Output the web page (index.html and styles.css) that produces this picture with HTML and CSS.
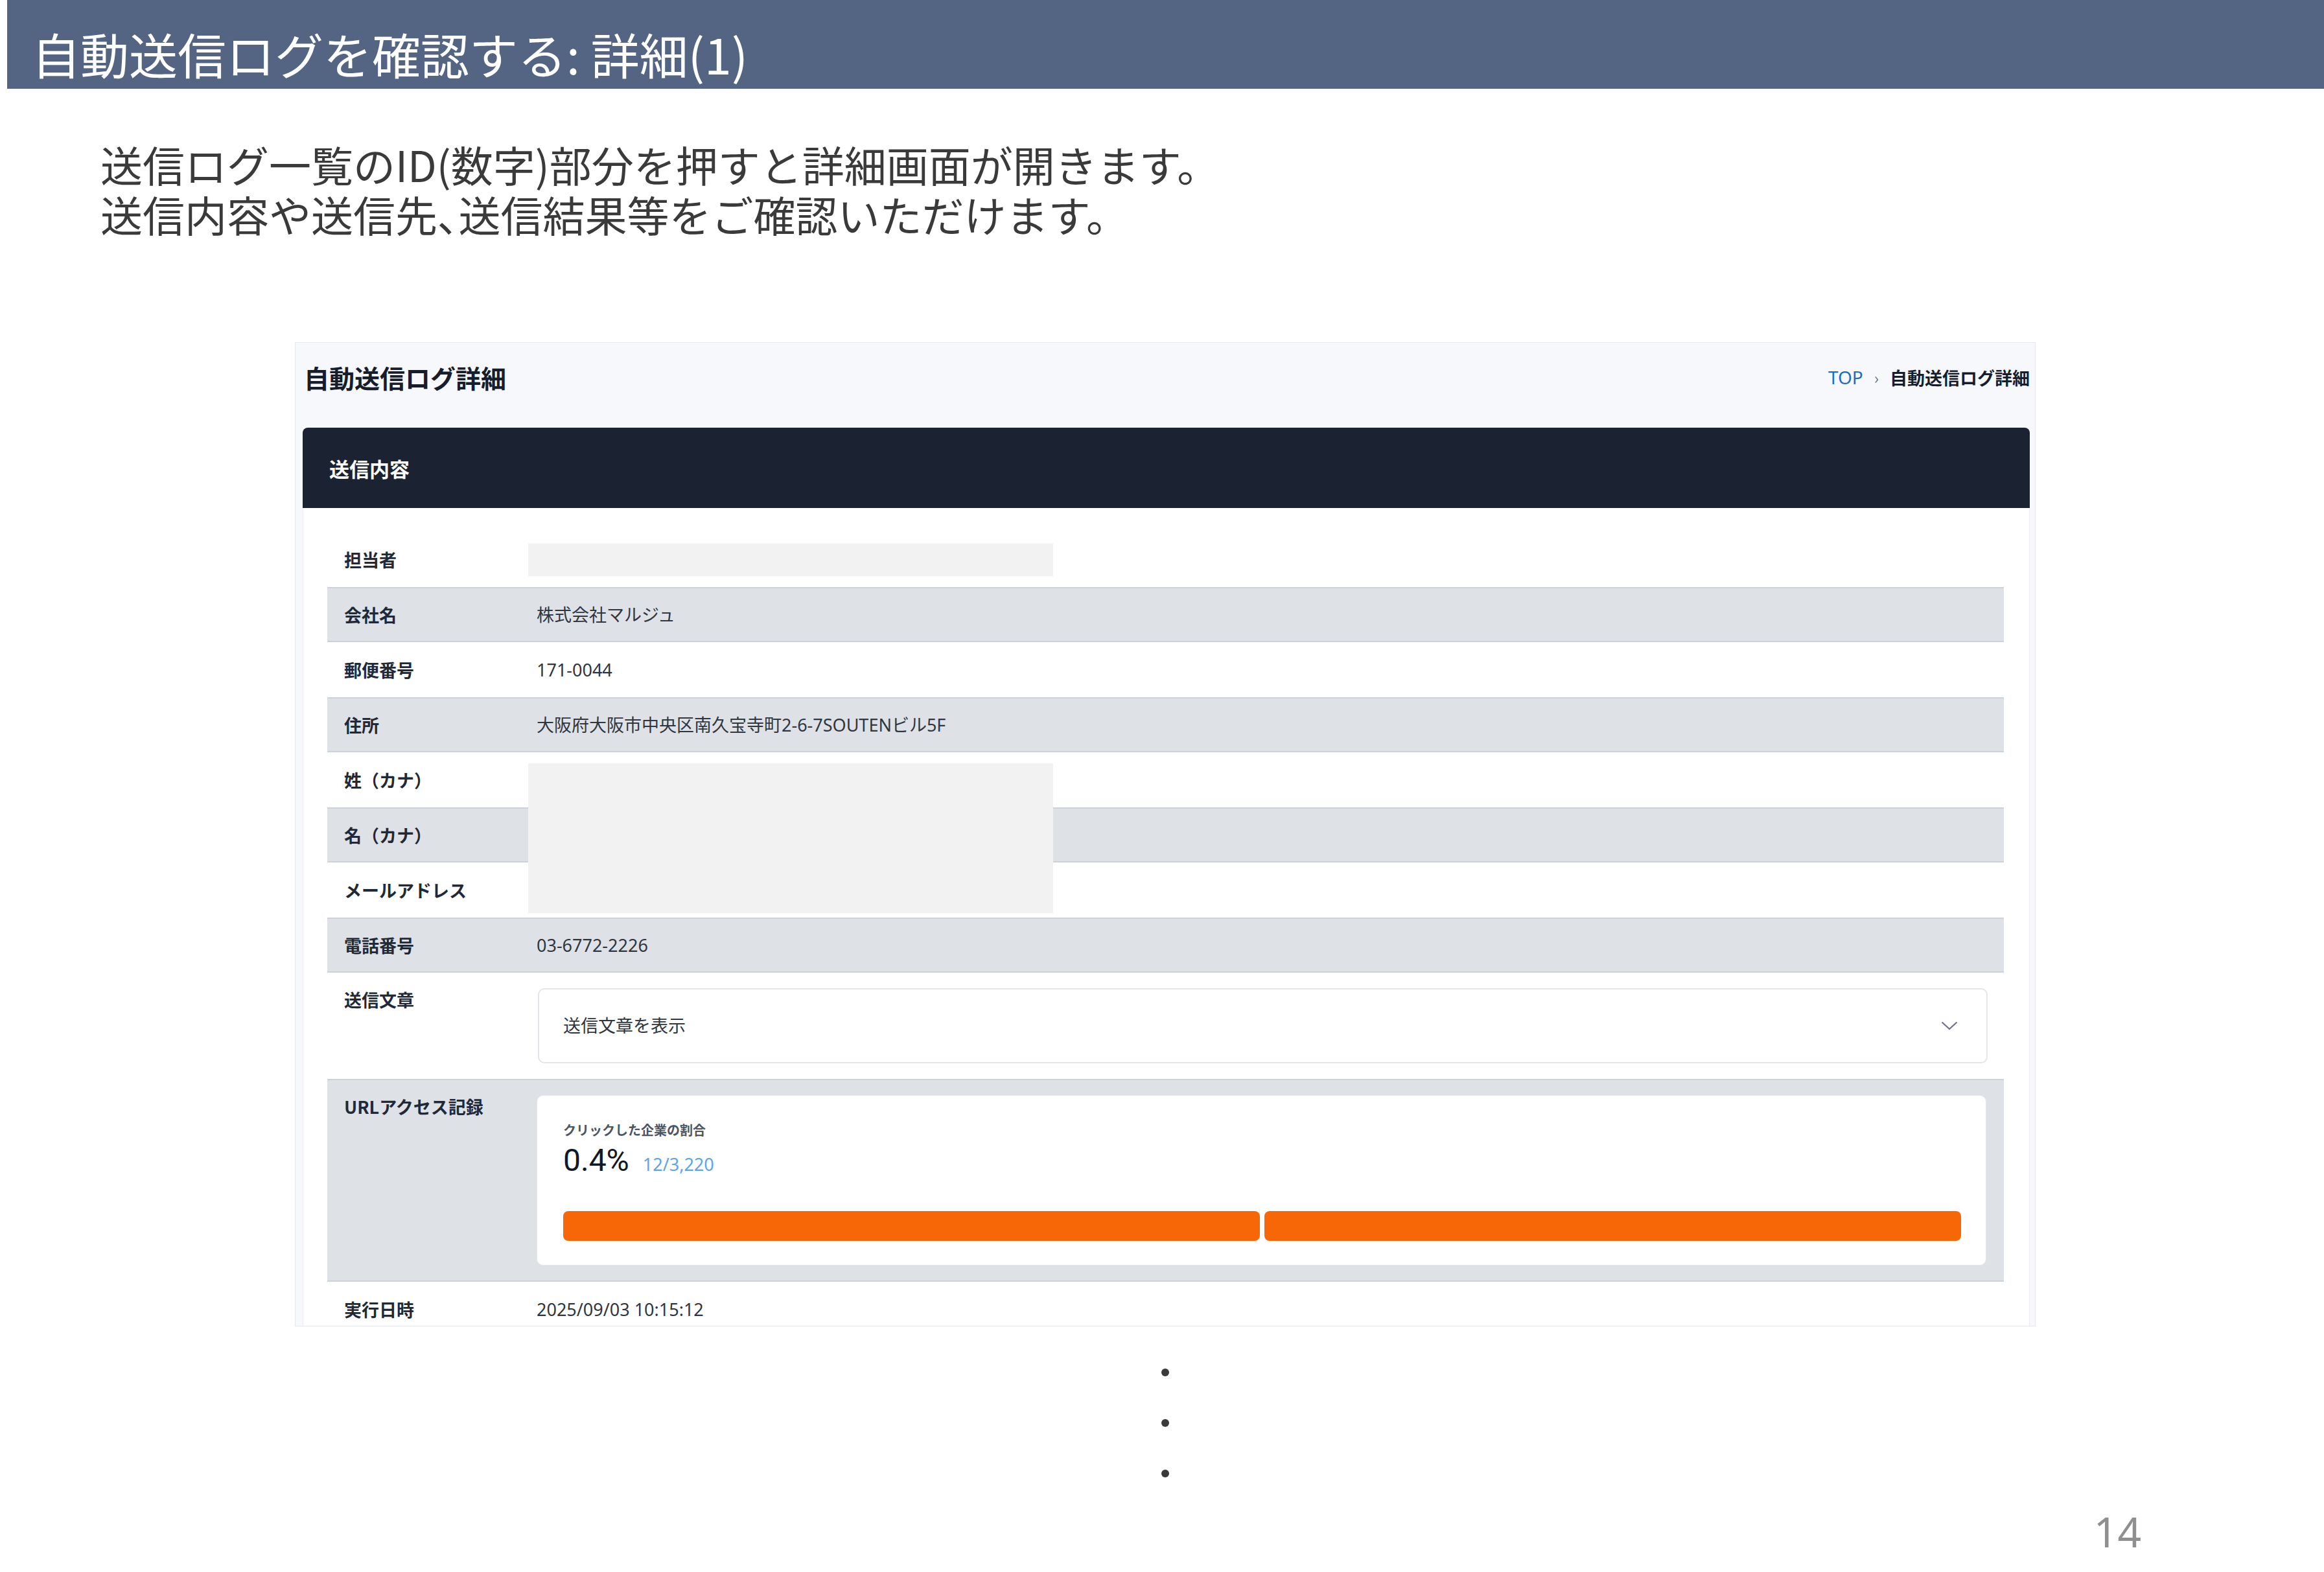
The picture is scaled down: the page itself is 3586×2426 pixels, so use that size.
FILE: index.html
```html
<!doctype html>
<html lang="ja">
  <head>
    <meta charset="UTF-8" />
    <title>自動送信ログを確認する: 詳細(1)</title>
    <link rel="stylesheet" href="styles.css">
  </head>
  <body>
    <div class="slide">
      <h1 class="slide-title">自動送信ログを確認する: 詳細(1)</h1>

      <p class="lead">
        送信ログ一覧のID(数字)部分を押すと詳細画面が開きます。<br />
        送信内容や送信先<span class="tight">、</span>送信結果等をご確認いただけます。
      </p>

      <div class="shot">
        <div class="page-head">
          <h2 class="page-title">自動送信ログ詳細</h2>
          <div class="crumbs">
            <span class="crumb-link">TOP</span>
            <span class="crumb-sep">›</span>
            <span class="crumb-current">自動送信ログ詳細</span>
          </div>
        </div>

        <div class="panel">
          <div class="panel-head">送信内容</div>
          <div class="panel-body">
            <div class="row">
              <div class="label">担当者</div>
              <div class="value"><div class="redact-line"></div></div>
            </div>
            <div class="row alt">
              <div class="label">会社名</div>
              <div class="value">株式会社マルジュ</div>
            </div>
            <div class="row">
              <div class="label">郵便番号</div>
              <div class="value">171-0044</div>
            </div>
            <div class="row alt">
              <div class="label">住所</div>
              <div class="value">大阪府大阪市中央区南久宝寺町2-6-7SOUTENビル5F</div>
            </div>
            <div class="row">
              <div class="label">姓（カナ）</div>
              <div class="value"></div>
            </div>
            <div class="row alt">
              <div class="label">名（カナ）</div>
              <div class="value"></div>
            </div>
            <div class="row">
              <div class="label">メールアドレス</div>
              <div class="value"></div>
            </div>
            <div class="row alt">
              <div class="label">電話番号</div>
              <div class="value">03-6772-2226</div>
            </div>
            <div class="row row-top">
              <div class="label">送信文章</div>
              <div class="value">
                <div class="disclosure">
                  <span>送信文章を表示</span>
                  <svg class="chevron" width="26" height="14" viewBox="0 0 26 14">
                    <polyline points="1.5,1.5 13,12 24.5,1.5" fill="none" stroke="#6b7280" stroke-width="2.2" />
                  </svg>
                </div>
              </div>
            </div>
            <div class="row row-top alt">
              <div class="label">URLアクセス記録</div>
              <div class="value">
                <div class="stat-card">
                  <div class="stat-label">クリックした企業の割合</div>
                  <div class="stat-line">
                    <span class="stat-num">0.4%</span>
                    <span class="stat-sub">12/3,220</span>
                  </div>
                  <div class="stat-bar">
                    <div class="seg"></div>
                    <div class="seg"></div>
                  </div>
                </div>
              </div>
            </div>
            <div class="row">
              <div class="label">実行日時</div>
              <div class="value">2025/09/03 10:15:12</div>
            </div>

            <!-- redaction over the name / mail rows -->
            <div class="redact-block"></div>
          </div>
        </div>
      </div>

      <div class="more">
        <span class="dot"></span>
        <span class="dot"></span>
        <span class="dot"></span>
      </div>

      <div class="page-no">14</div>
    </div>
  </body>
</html>
```

FILE: styles.css
```css
body {
  margin: 0;
  background: #fff;
  font-family: "Noto Sans CJK JP", sans-serif;
}

.slide {
  width: 3586px;
  height: 2426px;
  overflow: hidden;
}

.slide-title {
  margin: 0 0 0 11px;
  height: 137px;
  box-sizing: border-box;
  padding: 44px 0 0 38px;
  background: #536582;
  color: #fff;
  font-size: 75px;
  line-height: 78px;
  font-weight: 400;
}

.lead {
  margin: 78px 0 0 155px;
  font-size: 65px;
  line-height: 77px;
  color: #3a3a3a;
}

.tight {
  font-feature-settings: "palt";
}

/* screenshot card */
.shot {
  margin: 159px 0 0 455px;
  width: 2686px;
  height: 1519px;
  box-sizing: border-box;
  border: 1px solid #e6e8eb;
  background: #f7f8fb;
  padding: 0 8px 0 11px;
  overflow: hidden;
}

.page-head {
  height: 106px;
  margin-bottom: 25px;
  padding-left: 2px;
  display: flex;
  justify-content: space-between;
  align-items: center;
}

.page-title {
  margin: 0;
  font-size: 39px;
  font-weight: 700;
  color: #161e2e;
}

.crumbs {
  display: flex;
  align-items: center;
  gap: 17px;
  font-size: 27px;
}

.crumb-link {
  color: #1a6fc4;
  font-family: "Noto Sans", "Noto Sans CJK JP", sans-serif;
  font-size: 28px;
}

.crumb-sep {
  color: #6b7280;
  font-size: 24px;
}

.crumb-current {
  font-weight: 700;
  color: #161e2e;
}

.panel-head {
  height: 124px;
  border-radius: 8px 8px 0 0;
  background: #1b2333;
  padding-left: 41px;
  display: flex;
  align-items: center;
  color: #fff;
  font-size: 31px;
  font-weight: 700;
}

.panel-body {
  position: relative;
  background: #fff;
  border-left: 1px solid #eceef1;
  border-right: 1px solid #eceef1;
  padding: 37px 39px 0 37px;
}

.row {
  display: grid;
  grid-template-columns: 323px 1fr;
  align-items: center;
  height: 85px;
  box-sizing: border-box;
}

.row.alt {
  background: #dee2e6;
  border-top: 2px solid #cdd2d8;
  border-bottom: 2px solid #cdd2d8;
}

.row-top {
  height: auto;
  align-items: start;
  padding: 24px 0;
}

.row-top.alt {
  padding: 23px 0 23px;
}

.label {
  padding-left: 26px;
  font-size: 27px;
  line-height: 40px;
  font-weight: 700;
  color: #1f2937;
}

.row-top .label {
  margin-top: -2px;
}

.value {
  font-family: "Noto Sans", "Noto Sans CJK JP", sans-serif;
  font-size: 27px;
  line-height: 40px;
  color: #2f3640;
}

.redact-line {
  width: 810px;
  height: 50px;
  margin-left: -13px;
  background: #f2f2f2;
}

.redact-block {
  position: absolute;
  top: 394px;
  left: 347px;
  width: 810px;
  height: 231px;
  background: #f2f2f2;
}

.disclosure {
  margin: 0 25px 0 2px;
  height: 116px;
  box-sizing: border-box;
  border: 2px solid #e2e6eb;
  border-radius: 10px;
  padding: 0 44px 0 37px;
  display: flex;
  justify-content: space-between;
  align-items: center;
}

.chevron {
  display: block;
}

.stat-card {
  margin-right: 27px;
  background: #fff;
  border: 1px solid #e5e7eb;
  border-radius: 10px;
  padding: 39px 38px 37px 40px;
}

.stat-label {
  font-family: "Noto Sans CJK JP", sans-serif;
  font-size: 20px;
  line-height: 28px;
  font-weight: 700;
  color: #4b5563;
}

.stat-line {
  margin-top: 5px;
  display: flex;
  align-items: baseline;
  gap: 21px;
  line-height: 55px;
}

.stat-num {
  font-family: Roboto, sans-serif;
  font-size: 48px;
  color: #111827;
}

.stat-sub {
  font-size: 27px;
  color: #5ba4ef;
}

.stat-bar {
  margin-top: 45px;
  display: flex;
  gap: 7px;
  height: 46px;
}

.seg {
  flex: 1;
  background: #f76707;
  border-radius: 8px;
}

/* continuation dots */
.more {
  margin-top: 65px;
  padding-left: 10px;
  display: flex;
  flex-direction: column;
  align-items: center;
  gap: 66px;
}

.dot {
  width: 12px;
  height: 12px;
  border-radius: 50%;
  background: #3a3a3a;
}

.page-no {
  margin-top: 52px;
  padding-right: 282px;
  text-align: right;
  font-family: "Noto Sans", sans-serif;
  font-size: 64px;
  line-height: 63px;
  color: #8f8f8f;
}
```
